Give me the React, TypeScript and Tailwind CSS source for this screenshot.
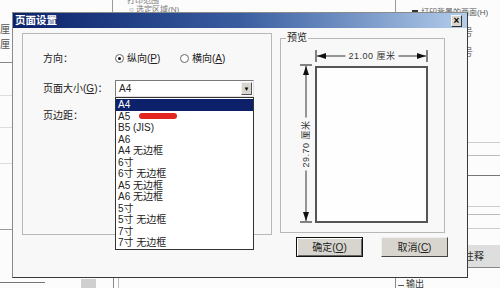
import React from "react";

const items = [
  "A4",
  "A5",
  "B5 (JIS)",
  "A6",
  "A4 无边框",
  "6寸",
  "6寸 无边框",
  "A5 无边框",
  "A6 无边框",
  "5寸",
  "5寸 无边框",
  "7寸",
  "7寸 无边框",
];

function Radio({ checked }: { checked?: boolean }) {
  return (
    <span className="flex h-[9px] w-[9px] items-center justify-center rounded-full border border-[#6a6a6a] bg-white">
      {checked && <span className="h-[3px] w-[3px] rounded-full bg-[#111]" />}
    </span>
  );
}

function Dialog() {
  return (
    <div className="relative z-10 flex h-[266px] w-[456px] shrink-0 flex-col border border-[#8a8a8a] border-b-[#3a3a3a] border-r-[#3a3a3a] bg-[#f8f8f8]">
      {/* title bar */}
      <div className="flex h-[15px] items-center bg-gradient-to-r from-[#0c216a] via-[#3a5da0] to-[#b4cdea] pl-[2px] pr-[5px]">
        <span className="text-[10.5px] font-bold leading-none text-white">页面设置</span>
        <span className="ml-auto flex h-[12px] w-[11px] items-center justify-center border border-[#f4f4f4] border-b-[#333] border-r-[#333] bg-[#d8d5cf] text-[10px] font-bold leading-none text-black">
          ×
        </span>
      </div>

      {/* body */}
      <div className="flex pl-[9px] pt-[5px]">
        {/* left group */}
        <div className="flex h-[202px] w-[250px] flex-col border border-[#b8b8b8] pl-[20px] pt-[17px] text-[10px]">
          <div className="flex h-[14px] items-center">
            <span className="w-[72px]">方向：</span>
            <div className="flex w-[65px] items-center gap-[3px]">
              <Radio checked />
              <span>
                纵向(<span className="underline">P</span>)
              </span>
            </div>
            <div className="flex items-center gap-[3px]">
              <Radio />
              <span>
                横向(<span className="underline">A</span>)
              </span>
            </div>
          </div>

          <div className="mt-[15px] flex h-[17px] items-center">
            <span className="w-[72px]">
              页面大小(<span className="underline">G</span>)：
            </span>
            <div className="relative flex h-[17px] w-[139px] items-stretch border border-[#7a7a7a] border-b-[#e0e0e0] border-r-[#e0e0e0] bg-white">
              <span className="flex items-center pl-[3px] text-[10px]">A4</span>
              <span className="my-[1px] mr-[1px] ml-auto flex w-[11px] items-center justify-center border border-[#f4f4f4] border-b-[#555] border-r-[#555] bg-[#d8d5cf] text-[6px] leading-none text-black">
                ▼
              </span>
              {/* open dropdown list (overlay) */}
              <div className="absolute left-[-1px] top-[16px] z-10 flex h-[153px] w-[139px] flex-col border border-[#333] bg-white pt-[1px]">
                {items.map((it, i) => (
                  <div
                    key={it}
                    className={
                      i === 0
                        ? "h-[11.5px] bg-[#0c216a] pl-[2px] text-[10px] leading-[11.5px] text-white"
                        : "flex h-[11.5px] items-center gap-[4px] pl-[2px] text-[10px] leading-[11.5px] text-[#222]"
                    }
                  >
                    {it}
                    {i === 1 && <span className="ml-[5px] h-[6px] w-[38px] rounded-full bg-[#e3241f] blur-[0.6px]" />}
                  </div>
                ))}
              </div>
            </div>
          </div>

          <div className="mt-[13px] h-[12px] leading-[12px]">页边距：</div>
        </div>

        {/* right column */}
        <div className="ml-[8px] flex flex-col">
          <div className="relative mt-[5px] h-[195px] w-[165px] border border-[#b8b8b8]">
            <span className="absolute left-[5px] top-[-8px] bg-[#f8f8f8] px-[1px] text-[10px] leading-[14px]">预览</span>
            <svg className="absolute left-0 top-0" width="165" height="195" viewBox="0 0 165 195">
              <line x1="35" y1="11" x2="35" y2="23" stroke="#333" strokeWidth="1.2" />
              <line x1="146" y1="11" x2="146" y2="23" stroke="#333" strokeWidth="1.2" />
              <line x1="36" y1="17" x2="145" y2="17" stroke="#333" strokeWidth="1" />
              <polygon points="36,17 45,14 45,20" fill="#111" />
              <polygon points="145,17 136,14 136,20" fill="#111" />
              <rect x="35" y="28" width="111" height="155" fill="#fefefe" stroke="#555" strokeWidth="2" />
              <line x1="19" y1="26" x2="31" y2="26" stroke="#333" strokeWidth="1.2" />
              <line x1="19" y1="183" x2="31" y2="183" stroke="#333" strokeWidth="1.2" />
              <line x1="25" y1="27" x2="25" y2="182" stroke="#333" strokeWidth="1" />
              <polygon points="25,27 22,36 28,36" fill="#111" />
              <polygon points="25,182 22,173 28,173" fill="#111" />
            </svg>
            <span className="absolute left-[91px] top-[17px] -translate-x-1/2 -translate-y-1/2 whitespace-nowrap bg-[#f8f8f8] px-[3px] text-[9px] leading-[10px] tracking-[0.5px] text-[#333]">
              21.00 厘米
            </span>
            <span className="absolute left-[25px] top-[105px] -translate-x-1/2 -translate-y-1/2 -rotate-90 whitespace-nowrap bg-[#f8f8f8] px-[3px] text-[9px] leading-[10px] tracking-[0.5px] text-[#333]">
              29.70 厘米
            </span>
          </div>

          <div className="mt-[4px] flex gap-[18px] pl-[16px] text-[10px]">
            <div className="flex h-[20px] w-[67px] items-center justify-center border border-[#111] bg-[#d8d5cf] shadow-[inset_1px_1px_0_#fff,inset_-1px_-1px_0_#666]">
              确定(<span className="underline">O</span>)
            </div>
            <div className="flex h-[20px] w-[67px] items-center justify-center border border-[#eee] border-b-[#444] border-r-[#444] bg-[#d8d5cf]">
              取消(<span className="underline">C</span>)
            </div>
          </div>
        </div>
      </div>
    </div>
  );
}

export default function App() {
  return (
    <div className="flex h-[288px] w-[500px] flex-col overflow-hidden bg-[#fcfcfc] font-['Liberation_Sans','Noto_Sans_CJK_SC',sans-serif] text-[#222]">
      {/* top strip of the background app */}
      <div className="flex h-[12px] shrink-0 items-start">
        <div className="w-[112px] shrink-0" />
        <div className="h-[12px] w-px shrink-0 bg-[#9a9a9a]" />
        <div className="ml-[14px] -mt-[4px] flex w-[268px] shrink-0 flex-col text-[8px] leading-[9px] text-[#777]">
          <span>打印范围</span>
          <span className="pl-[2px]">○ 选定区域(N)</span>
        </div>
        <div className="h-[12px] w-px shrink-0 bg-[#9a9a9a]" />
        <div className="ml-[16px] mt-[8px] flex shrink-0 items-center gap-[3px] whitespace-nowrap text-[8px] leading-[9px] text-[#555]">
          <span className="h-[6px] w-[6px] bg-[#333]" />
          <span>打印背景的两面(H)</span>
        </div>
      </div>

      {/* middle band: side strips around the dialog */}
      <div className="flex h-[266px] shrink-0">
        <div className="flex w-[12px] shrink-0 flex-col pt-[10px] text-[10px] text-[#555]">
          <span className="h-[15px] leading-[15px]">厘</span>
          <span className="h-[15px] leading-[15px]">厘</span>
          <div className="mt-[10px] h-px bg-[#888]" />
          <div className="mt-[32px] h-px bg-[#ddd]" />
          <div className="mt-[31px] h-px bg-[#ddd]" />
          <div className="mt-[35px] h-px bg-[#ddd]" />
          <div className="mt-[65px] h-px bg-[#999]" />
        </div>

        <Dialog />

        <div className="flex w-[32px] shrink-0 flex-col pt-[15px] text-[10px] text-[#777]">
          <span className="-ml-[5px] h-[12px] leading-[12px]">号</span>
          <span className="-ml-[5px] mt-[8px] h-[12px] leading-[12px]">号</span>
          <span className="-ml-[5px] mt-[7px] h-[12px] leading-[12px]">》</span>
          <div className="mt-[64px] h-px bg-[#ccc]" />
          <div className="mt-[12px] h-px bg-[#bbb]" />
          <div className="mt-[19px] h-px bg-[#777]" />
          <div className="mt-[30px] h-px bg-[#ccc]" />
          <div className="mt-[7px] h-px bg-[#bbb]" />
          <div className="mt-[13px] h-px bg-[#ccc]" />
          <div className="-ml-[13px] mt-[16px] flex h-[23px] items-center border-b border-[#888] bg-[#dedede] pl-[9px] text-[10px] text-[#333]">
            注释
          </div>
        </div>
      </div>

      {/* bottom strip */}
      <div className="flex h-[10px] shrink-0 items-start">
        <div className="mt-[4px] h-px w-[45px] shrink-0 bg-[#777]" />
        <div className="w-[36px] shrink-0" />
        <div className="mt-[1px] h-[9px] w-[15px] shrink-0 bg-[#cfcfcf]" />
        <div className="w-[17px] shrink-0" />
        <div className="h-[10px] w-px shrink-0 bg-[#888]" />
        <div className="w-[4px] shrink-0" />
        <div className="h-[10px] w-px shrink-0 bg-[#bbb]" />
        <div className="w-[276px] shrink-0" />
        <div className="h-[10px] w-px shrink-0 bg-[#888]" />
        <div className="ml-[2px] mt-[7px] h-px w-[6px] shrink-0 bg-[#555]" />
        <span className="ml-[2px] mt-[1px] text-[9px] leading-[10px] text-[#333]">输出</span>
      </div>
    </div>
  );
}
